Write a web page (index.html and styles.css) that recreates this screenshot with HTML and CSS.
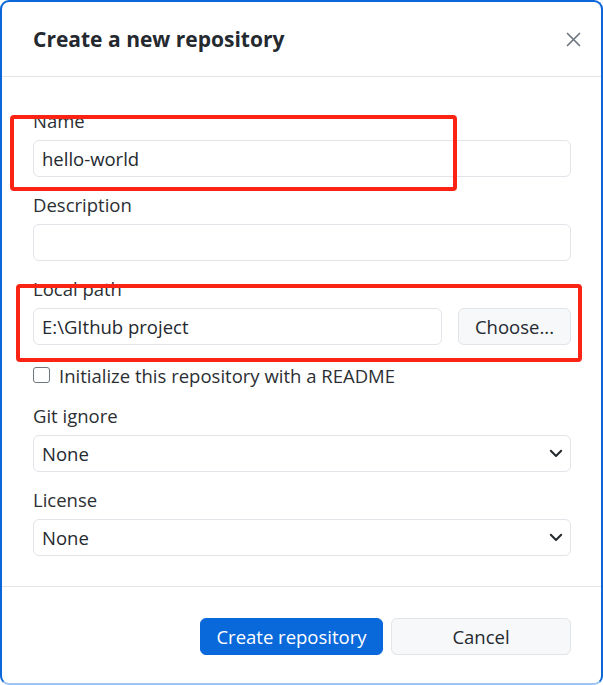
FILE: index.html
```html
<!DOCTYPE html>
<html lang="en">
<head>
<meta charset="utf-8">
<title>Create a new repository</title>
<link rel="stylesheet" href="styles.css">
</head>
<body>
<div class="dialog">
  <header class="dialog-header">
    <h1 class="dialog-title">Create a new repository</h1>
    <button class="close-btn" aria-label="Close">
      <svg width="15" height="15" viewBox="0 0 15 15"><path d="M1.5 1.5 L13.5 13.5 M13.5 1.5 L1.5 13.5" stroke="#6e7781" stroke-width="1.7" stroke-linecap="round" fill="none"/></svg>
    </button>
  </header>
  <div class="dialog-body">
    <div class="field">
      <label class="label">Name</label>
      <div class="input">hello-world</div>
    </div>
    <div class="field">
      <label class="label">Description</label>
      <div class="input"></div>
    </div>
    <div class="field">
      <label class="label">Local path</label>
      <div class="path-row">
        <div class="input path-input">E:\GIthub project</div>
        <button class="btn btn-secondary choose-btn">Choose...</button>
      </div>
    </div>
    <div class="field checkbox-row">
      <span class="checkbox"></span>
      <span class="checkbox-label">Initialize this repository with a README</span>
    </div>
    <div class="field">
      <label class="label">Git ignore</label>
      <div class="input select">None
        <svg class="chevron" width="14" height="9" viewBox="0 0 14 9"><path d="M1.8 1.8 L7 7 L12.2 1.8" stroke="#24292f" stroke-width="2" fill="none" stroke-linecap="round" stroke-linejoin="round"/></svg>
      </div>
    </div>
    <div class="field last">
      <label class="label">License</label>
      <div class="input select">None
        <svg class="chevron" width="14" height="9" viewBox="0 0 14 9"><path d="M1.8 1.8 L7 7 L12.2 1.8" stroke="#24292f" stroke-width="2" fill="none" stroke-linecap="round" stroke-linejoin="round"/></svg>
      </div>
    </div>
  </div>
  <footer class="dialog-footer">
    <button class="btn btn-primary create-btn">Create repository</button>
    <button class="btn btn-secondary cancel-btn">Cancel</button>
  </footer>
  <div class="annot annot-name"></div>
  <div class="annot annot-path"></div>
</div>
</body>
</html>
```
FILE: styles.css
```css
* { box-sizing: border-box; }
html, body { margin: 0; padding: 0; background: #ffffff; }
body {
  font-family: "Open Sans", "Noto Sans", sans-serif;
  color: #24292f;
}
.dialog {
  position: relative;
  width: 603px;
  height: 685px;
  border: 2px solid #0a66d9;
  border-bottom-color: #9ec4f2;
  border-radius: 9px;
  background: #fff;
  display: flex;
  flex-direction: column;
}
.dialog-header {
  height: 75px;
  border-bottom: 1px solid #e1e4e8;
  display: flex;
  align-items: center;
  justify-content: space-between;
  padding: 0 18px 0 31px;
}
.dialog-title {
  margin: 0;
  font-size: 21px;
  font-weight: 700;
  color: #24292f;
  letter-spacing: 0;
}
.close-btn {
  border: 0;
  background: none;
  padding: 0;
  width: 20px;
  height: 20px;
  display: flex;
  align-items: center;
  justify-content: center;
}
.dialog-body {
  padding: 33px 30px 30px 31px;
  border-bottom: 1px solid #e1e4e8;
}
.field { margin-bottom: 17px; }
.field.last { margin-bottom: 0; }
.label {
  display: block;
  font-size: 18.5px;
  line-height: 21px;
  margin-bottom: 8px;
  padding-bottom: 1px;
  color: #2b2f33;
}
.input {
  height: 37px;
  border: 1px solid #e1e4e8;
  border-radius: 6px;
  padding: 0 8px;
  font-size: 18.5px;
  line-height: 35px;
  color: #24292f;
  background: #fff;
}
.path-row {
  display: flex;
  gap: 16px;
}
.path-input { flex: 1; }
.btn {
  height: 37px;
  border-radius: 6px;
  font-family: inherit;
  font-size: 18.5px;
  padding: 0;
  cursor: pointer;
}
.btn-secondary {
  background: #f6f8fa;
  border: 1px solid #e1e4e8;
  color: #24292f;
}
.choose-btn { width: 113px; }
.checkbox-row {
  display: flex;
  align-items: center;
  gap: 9px;
  height: 26px;
}
.checkbox {
  width: 17px;
  height: 16px;
  border: 1.5px solid #6e7781;
  border-radius: 3px;
  background: #fff;
}
.checkbox-label { font-size: 18.5px; color: #2b2f33; }
.select {
  display: flex;
  align-items: center;
  justify-content: space-between;
  padding-right: 7px;
}
.dialog-footer {
  flex: 1;
  display: flex;
  justify-content: flex-end;
  align-items: flex-start;
  gap: 8px;
  padding: 31px 30px 0 31px;
}
.btn-primary {
  background: #0969da;
  border: 1px solid #0969da;
  color: #fff;
}
.create-btn { width: 183px; }
.cancel-btn { width: 180px; }
.annot {
  position: absolute;
  border: 4px solid #fa2314;
  border-radius: 4px;
  pointer-events: none;
}
.annot-name { left: 8px; top: 113px; width: 447px; height: 76px; }
.annot-path { left: 14px; top: 282px; width: 566px; height: 78px; }
```
